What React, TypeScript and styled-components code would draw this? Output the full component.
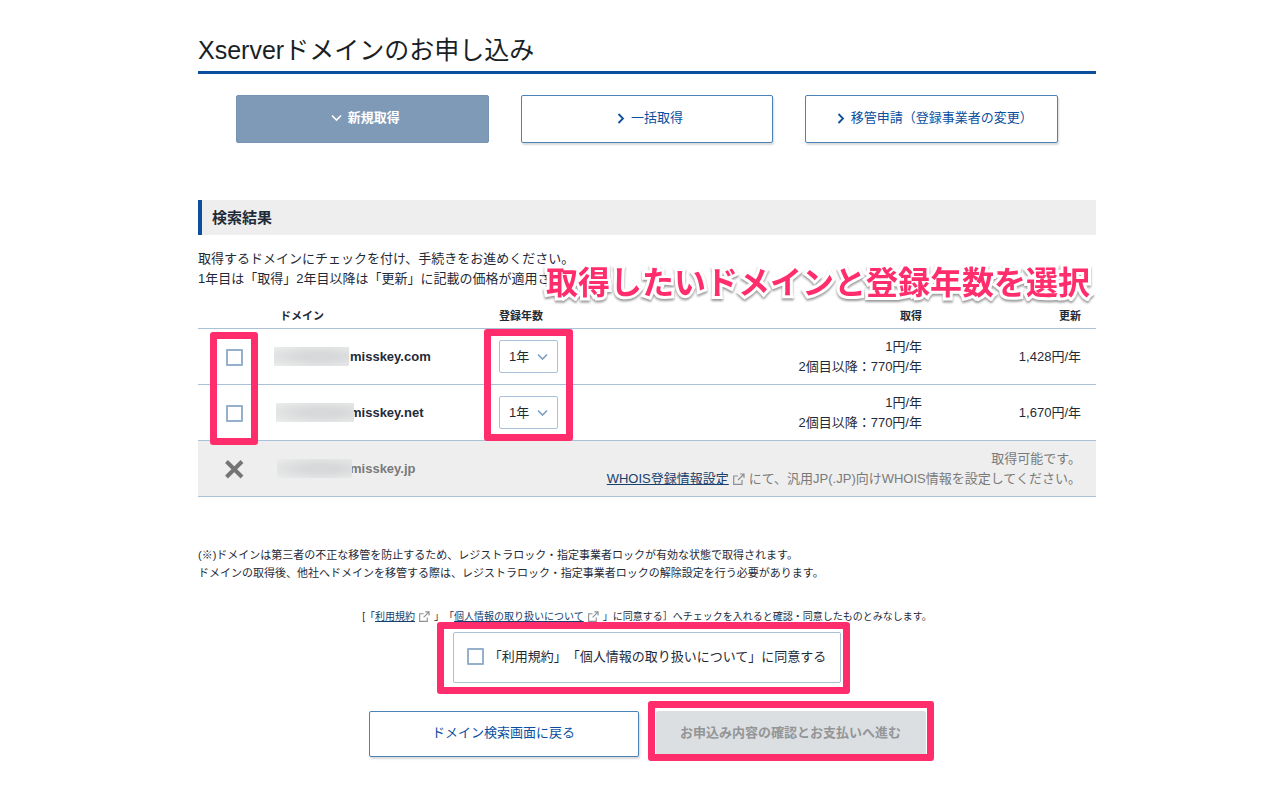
import React, { useState } from "react";
import styled, { createGlobalStyle, css } from "styled-components";

const GlobalStyle = createGlobalStyle`
  *, *::before, *::after { box-sizing: border-box; }
  body {
    margin: 0;
    background: #fff;
    color: #1f2a37;
    font-family: "Liberation Sans", "Noto Sans CJK JP", sans-serif;
    font-size: 13px;
    line-height: 20px;
    text-spacing-trim: space-all;
  }
  button, input, select { font: inherit; margin: 0; }
`;

const ACCENT = "#ff2d6b";
const BLUE = "#0b4f9e";
const LINE = "#a9c1d9";

const Page = styled.main`
  max-width: 912px;
  margin: 0 auto;
  padding: 30px 0 43px 14px;
`;

const Title = styled.h1`
  margin: 0 0 21px;
  border-bottom: 3px solid ${BLUE};
  font-size: 25px;
  font-weight: 400;
  line-height: 41px;
  color: #1a1f26;
`;

const Tabs = styled.nav`
  display: flex;
  justify-content: center;
  gap: 32px;
  margin: 0 38px 57px;
`;

const Tab = styled.button<{ $active?: boolean }>`
  flex: 1;
  display: flex;
  align-items: center;
  justify-content: center;
  gap: 6px;
  height: 48px;
  padding: 0 0 2px 6px;
  border: 1px solid #4b82b8;
  border-radius: 2px;
  background: #fff;
  color: ${BLUE};
  box-shadow: 1px 2px 2px rgba(0, 0, 0, 0.15);
  ${(p) =>
    p.$active &&
    css`
      border-color: #7394b3;
      background: #7f9ab6;
      color: #fff;
      font-weight: 700;
      box-shadow: none;
    `}
`;

const Heading = styled.h2`
  margin: 0 0 14px;
  padding-left: 10px;
  border-left: 4px solid ${BLUE};
  background: #eee;
  font-size: 15px;
  font-weight: 700;
  line-height: 35px;
`;

const LeadBlock = styled.div`
  position: relative;
`;

const Lead = styled.p`
  margin: 0 0 16px;
`;

const Callout = styled.strong`
  position: absolute;
  right: 6px;
  top: 10px;
  color: ${ACCENT};
  font-size: 32px;
  line-height: 48px;
  white-space: nowrap;
  paint-order: stroke fill;
  -webkit-text-stroke: 6px #fff;
  filter: drop-shadow(0 2px 1px rgba(0, 0, 0, 0.4));
`;

const Marker = styled.div`
  position: absolute;
  border: 7px solid ${ACCENT};
  border-radius: 3px;
  pointer-events: none;
`;

const CheckMarker = styled(Marker)`
  left: 12px;
  top: 27px;
  width: 48px;
  height: 113px;
`;

const YearMarker = styled(Marker)`
  left: 286px;
  top: 24px;
  width: 89px;
  height: 112px;
`;

const AgreeMarker = styled(Marker)`
  inset: -11px -10px -12px -17px;
`;

const SubmitMarker = styled(Marker)`
  inset: -10px -8px -4px -8px;
`;

const TableBlock = styled.div`
  position: relative;
  margin-bottom: 49px;
`;

const Table = styled.table`
  width: 100%;
  table-layout: fixed;
  border-collapse: separate;
  border-spacing: 0;
`;

const Col = styled.col<{ $width?: number }>`
  ${(p) => p.$width && `width: ${p.$width}px;`}
`;

const HeadCell = styled.th<{ $end?: boolean }>`
  height: 24px;
  padding: 0 ${(p) => (p.$end ? 15 : 10)}px 2px;
  border-bottom: 1px solid ${LINE};
  font-size: 11px;
  text-align: ${(p) => (p.$end ? "right" : "left")};
`;

const Row = styled.tr<{ $muted?: boolean }>`
  ${(p) => p.$muted && "background: #eee; color: #7a7a7a;"}
`;

const Cell = styled.td<{ $align?: "center" | "right" }>`
  height: 56px;
  padding: 0 ${(p) => (p.$align === "right" ? 15 : p.$align === "center" ? 0 : 10)}px;
  border-bottom: 1px solid ${LINE};
  text-align: ${(p) => p.$align ?? "left"};
  vertical-align: middle;
  line-height: 20px;
`;

const Check = styled.input`
  appearance: none;
  flex: none;
  display: inline-block;
  vertical-align: middle;
  width: 17px;
  height: 17px;
  border: 2px solid #95b0cb;
  border-radius: 1px;
  background: #fff;
  &:checked { background: ${BLUE}; }
`;

const Domain = styled.div`
  display: flex;
  position: relative;
  font-weight: 700;
`;

const Mask = styled.span<{ $start: number; $width: number }>`
  position: absolute;
  left: ${(p) => p.$start}px;
  top: 0;
  width: ${(p) => p.$width}px;
  height: 19px;
  background: radial-gradient(ellipse at 60% 50%, #d6d8d9 25%, #ebecec 100%);
`;

const DomainName = styled.span`
  margin-left: 70px;
`;

const SelectWrap = styled.span`
  display: inline-block;
  position: relative;
  vertical-align: middle;
  width: 59px;
  svg { position: absolute; right: 10px; top: 13px; pointer-events: none; }
`;

const Select = styled.select`
  appearance: none;
  display: block;
  width: 100%;
  height: 33px;
  padding: 0 9px;
  border: 1px solid ${LINE};
  border-radius: 2px;
  background: #fff;
  color: inherit;
`;

const Link = styled.a`
  color: #17406d;
  text-decoration: underline;
`;

const Note = styled.p`
  margin: 0 0 26px;
  font-size: 11px;
  line-height: 18px;
`;

const Consent = styled.section`
  display: flex;
  flex-direction: column;
  align-items: center;
`;

const ConsentHint = styled.p`
  margin: 0 0 6px;
  font-size: 10px;
  line-height: 18px;
  white-space: nowrap;
`;

const Agree = styled.label`
  position: relative;
  display: flex;
  align-items: center;
  gap: 5px;
  height: 51px;
  margin-bottom: 28px;
  padding: 0 14px 2px 13px;
  border: 1px solid ${LINE};
  border-radius: 2px;
`;

const Actions = styled.div`
  display: flex;
  gap: 17px;
`;

const SubmitWrap = styled.div`
  position: relative;
`;

const Action = styled.button`
  width: 270px;
  height: 46px;
  padding: 0 0 2px;
  border: 1px solid #4b82b8;
  border-radius: 2px;
  background: #fff;
  color: ${BLUE};
  box-shadow: 1px 2px 2px rgba(0, 0, 0, 0.15);
  &:disabled {
    border-color: #dcdfe2;
    background: #dcdfe2;
    color: #939597;
    font-weight: 700;
    box-shadow: none;
  }
`;

const ExternalSvg = styled.svg`
  margin: 0 4px;
  vertical-align: -2px;
`;

const External = ({ size }: { size: number }) => (
  <ExternalSvg width={size} height={size} viewBox="0 0 12 12" fill="none" stroke="#8c9094" strokeWidth="1.2" aria-hidden>
    <path d="M5 3H.7v8.300h8.300V7M7 1h4v4M11 1 5 7" />
  </ExternalSvg>
);

const ChevronDown = ({ color }: { color: string }) => (
  <svg width="11" height="8" viewBox="0 0 11 8" fill="none" stroke={color} strokeWidth="1.6" aria-hidden>
    <path d="M1 1.500 5.500 6 10 1.500" />
  </svg>
);

const ChevronRight = () => (
  <svg width="8" height="11" viewBox="0 0 8 11" fill="none" stroke={BLUE} strokeWidth="1.8" aria-hidden>
    <path d="M1.500 1 6 5.500 1.500 10" />
  </svg>
);

const CrossSvg = styled.svg`
  display: block;
  margin: 0 auto;
`;

const Cross = () => (
  <CrossSvg width="20" height="20" viewBox="0 0 20 20" stroke="#757575" strokeWidth="4" role="img" aria-label="選択不可">
    <path d="M2.500 2.500 18 18M18 2.500 2.500 18" />
  </CrossSvg>
);

const domains = [
  { name: "misskey.com", renewal: "1,428円/年", start: -6, width: 75 },
  { name: "misskey.net", renewal: "1,670円/年", start: -4, width: 78 },
];

export default function App() {
  const [agreed, setAgreed] = useState(false);
  return (
    <>
      <GlobalStyle />
      <Page>
        <Title>Xserverドメインのお申し込み</Title>
        <Tabs>
          <Tab type="button" $active>
            <ChevronDown color="#fff" />
            新規取得
          </Tab>
          <Tab type="button">
            <ChevronRight />
            一括取得
          </Tab>
          <Tab type="button">
            <ChevronRight />
            移管申請（登録事業者の変更）
          </Tab>
        </Tabs>

        <Heading>検索結果</Heading>
        <LeadBlock>
          <Lead>
            取得するドメインにチェックを付け、手続きをお進めください。
            <br />
            1年目は「取得」2年目以降は「更新」に記載の価格が適用さ
          </Lead>
          <Callout>取得したいドメインと登録年数を選択</Callout>
        </LeadBlock>

        <TableBlock>
          <Table>
            <colgroup>
              <Col $width={72} />
              <Col $width={219} />
              <Col $width={110} />
              <Col />
              <Col $width={159} />
            </colgroup>
            <thead>
              <tr>
                <HeadCell />
                <HeadCell>ドメイン</HeadCell>
                <HeadCell>登録年数</HeadCell>
                <HeadCell $end>取得</HeadCell>
                <HeadCell $end>更新</HeadCell>
              </tr>
            </thead>
            <tbody>
              {domains.map((d) => (
                <Row key={d.name}>
                  <Cell $align="center">
                    <Check type="checkbox" aria-label={d.name} />
                  </Cell>
                  <Cell>
                    <Domain>
                      <DomainName>{d.name}</DomainName>
                      <Mask $start={d.start} $width={d.width} />
                    </Domain>
                  </Cell>
                  <Cell>
                    <SelectWrap>
                      <Select aria-label={`${d.name} 登録年数`}>
                        <option>1年</option>
                      </Select>
                      <ChevronDown color="#7d9fc2" />
                    </SelectWrap>
                  </Cell>
                  <Cell $align="right">
                    1円/年
                    <br />
                    2個目以降：770円/年
                  </Cell>
                  <Cell $align="right">{d.renewal}</Cell>
                </Row>
              ))}
              <Row $muted>
                <Cell $align="center">
                  <Cross />
                </Cell>
                <Cell>
                  <Domain>
                    <DomainName>misskey.jp</DomainName>
                    <Mask $start={-3} $width={75} />
                  </Domain>
                </Cell>
                <Cell $align="right" colSpan={3}>
                  取得可能です。
                  <br />
                  <Link href="#whois">WHOIS登録情報設定</Link>
                  <External size={12} />
                  にて、汎用JP(.JP)向けWHOIS情報を設定してください。
                </Cell>
              </Row>
            </tbody>
          </Table>
          <CheckMarker />
          <YearMarker />
        </TableBlock>

        <Note>
          (※)ドメインは第三者の不正な移管を防止するため、レジストラロック・指定事業者ロックが有効な状態で取得されます。
          <br />
          ドメインの取得後、他社へドメインを移管する際は、レジストラロック・指定事業者ロックの解除設定を行う必要があります。
        </Note>

        <Consent>
          <ConsentHint>
            [「<Link href="#terms">利用規約</Link>
            <External size={11} />」「<Link href="#privacy">個人情報の取り扱いについて</Link>
            <External size={11} />」に同意する］へチェックを入れると確認・同意したものとみなします。
          </ConsentHint>
          <Agree>
            <Check type="checkbox" checked={agreed} onChange={(e) => setAgreed(e.target.checked)} />
            「利用規約」「個人情報の取り扱いについて」に同意する
            <AgreeMarker />
          </Agree>
          <Actions>
            <Action type="button">ドメイン検索画面に戻る</Action>
            <SubmitWrap>
              <Action type="button" disabled={!agreed}>お申込み内容の確認とお支払いへ進む</Action>
              <SubmitMarker />
            </SubmitWrap>
          </Actions>
        </Consent>
      </Page>
    </>
  );
}
